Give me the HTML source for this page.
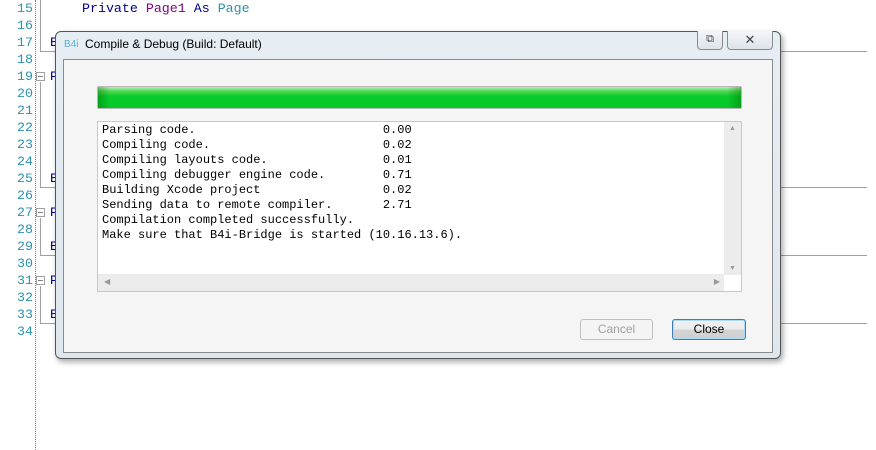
<!DOCTYPE html>
<html><head><style>
*{margin:0;padding:0;box-sizing:border-box}
body{width:876px;height:450px;background:#fff;position:relative;overflow:hidden;font-family:"Liberation Sans",sans-serif}
.ln{position:absolute;left:0;width:33px;text-align:right;font:13.3px "Liberation Mono",monospace;color:#2b91af;line-height:17px}
.dot{position:absolute;left:35px;top:0;height:450px;border-left:1px dotted #2b91af}
.code{position:absolute;font:13.3px "Liberation Mono",monospace;line-height:17px;white-space:pre}
.hl{position:absolute;left:40px;width:827px;height:1px;background:#a0a0a0}
.vl{position:absolute;left:40px;width:1px;background:#a0a0a0}
.fb{position:absolute;left:36px;width:9px;height:9px;border:1px solid #a0a0a0;background:#fff}
.fb:after{content:"";position:absolute;left:1px;top:3px;width:5px;height:1px;background:#808080}
.dlg{position:absolute;left:55px;top:31px;width:726px;height:328px;border:1px solid #555;border-radius:6px;background:linear-gradient(#e6edf3,#dfe7ee);box-shadow:2px 3px 6px rgba(0,0,0,.35)}
.inner{position:absolute;left:7px;top:27px;width:710px;height:294px;border:1px solid #8a8a8a;background:#f5f5f5}
.pb{position:absolute;left:33px;top:26px;width:645px;height:23px;border:1px solid #b8b8b8;border-radius:2px;background:linear-gradient(#b9f0b9 0%,#4fd84f 20%,#06cc2a 45%,#06c82a 100%)}
.pb:before{content:"";position:absolute;left:0;top:0;bottom:0;width:12px;background:linear-gradient(90deg,rgba(0,90,0,.35),transparent)}
.pb:after{content:"";position:absolute;right:0;top:0;bottom:0;width:14px;background:linear-gradient(270deg,rgba(0,90,0,.35),transparent)}
.tb{position:absolute;left:33px;top:61px;width:645px;height:171px;border:1px solid #c8c8c8;background:#fff}
pre{position:absolute;left:4px;top:1px;font:12px "Liberation Mono",monospace;line-height:15px;color:#000}
.vs{position:absolute;right:0;top:0;width:17px;height:153px;background:#ececec}
.hs{position:absolute;left:0;bottom:0;width:626px;height:17px;background:#ececec}
.btn{position:absolute;top:259px;height:21px;border-radius:3px;font-size:12px;text-align:center;line-height:19px}
</style></head><body>
<div class="dot"></div>
<div class="ln" style="top:0">15<br>16<br>17<br>18<br>19<br>20<br>21<br>22<br>23<br>24<br>25<br>26<br>27<br>28<br>29<br>30<br>31<br>32<br>33<br>34</div>
<div class="code" style="left:82px;top:0"><span style="color:#00008b">Private</span> <span style="color:#800080">Page1</span> <span style="color:#00008b">As</span> <span style="color:#2b91af">Page</span></div>
<div class="vl" style="top:0;height:51px"></div>
<div class="hl" style="top:51px"></div>
<div class="fb" style="top:72px"></div><div class="vl" style="top:82px;height:105px"></div><div class="hl" style="top:187px"></div>
<div class="fb" style="top:208px"></div><div class="vl" style="top:218px;height:37px"></div><div class="hl" style="top:255px"></div>
<div class="fb" style="top:276px"></div><div class="vl" style="top:286px;height:37px"></div><div class="hl" style="top:323px"></div>
<div class="code" style="left:50px;top:34px;color:#00008b">E</div>
<div class="code" style="left:50px;top:68px;color:#00008b">P</div>
<div class="code" style="left:50px;top:170px;color:#00008b">E</div>
<div class="code" style="left:50px;top:204px;color:#00008b">P</div>
<div class="code" style="left:50px;top:238px;color:#00008b">E</div>
<div class="code" style="left:50px;top:272px;color:#00008b">P</div>
<div class="code" style="left:50px;top:306px;color:#00008b">E</div>
<div class="dlg">
 <div style="position:absolute;left:8px;top:7px;font-size:10px;color:#5ab0d8">B4i</div>
 <div style="position:absolute;left:29px;top:5px;font-size:12px;color:#000">Compile &amp; Debug (Build: Default)</div>
 <div style="position:absolute;left:641px;top:-1px;width:26px;height:19px;border:1px solid #8a8a8a;border-top:none;border-radius:0 0 4px 4px;background:linear-gradient(#f4f6f8,#dde3ea);font-size:11px;text-align:center;line-height:17px;color:#444">⧉</div>
 <div style="position:absolute;left:671px;top:-1px;width:46px;height:19px;border:1px solid #8a8a8a;border-top:none;border-radius:0 0 4px 4px;background:linear-gradient(#f4f6f8,#dde3ea);font-size:13px;text-align:center;line-height:17px;color:#444">✕</div>
 <div class="inner">
  <div class="pb"></div>
  <div class="tb">
<pre>Parsing code.                          0.00
Compiling code.                        0.02
Compiling layouts code.                0.01
Compiling debugger engine code.        0.71
Building Xcode project                 0.02
Sending data to remote compiler.       2.71
Compilation completed successfully.
Make sure that B4i-Bridge is started (10.16.13.6).</pre>
   <div class="vs"><div style="position:absolute;left:5px;top:3px;font-size:7px;color:#999">▲</div><div style="position:absolute;left:5px;bottom:3px;font-size:7px;color:#999">▼</div></div>
   <div class="hs"><div style="position:absolute;left:6px;top:3px;font-size:8px;color:#999">◀</div><div style="position:absolute;right:4px;top:3px;font-size:8px;color:#999">▶</div></div>
  </div>
  <div class="btn" style="left:516px;width:73px;border:1px solid #c0c0c0;background:#f4f4f4;color:#a0a0a0">Cancel</div>
  <div class="btn" style="left:608px;width:74px;border:1px solid #3c7fb1;background:linear-gradient(#f2f2f2 0%,#ebebeb 50%,#d4d4d4 51%,#cfcfcf 100%);color:#000;box-shadow:inset 0 0 0 1px #a9dbf6">Close</div>
 </div>
</div>
</body></html>
